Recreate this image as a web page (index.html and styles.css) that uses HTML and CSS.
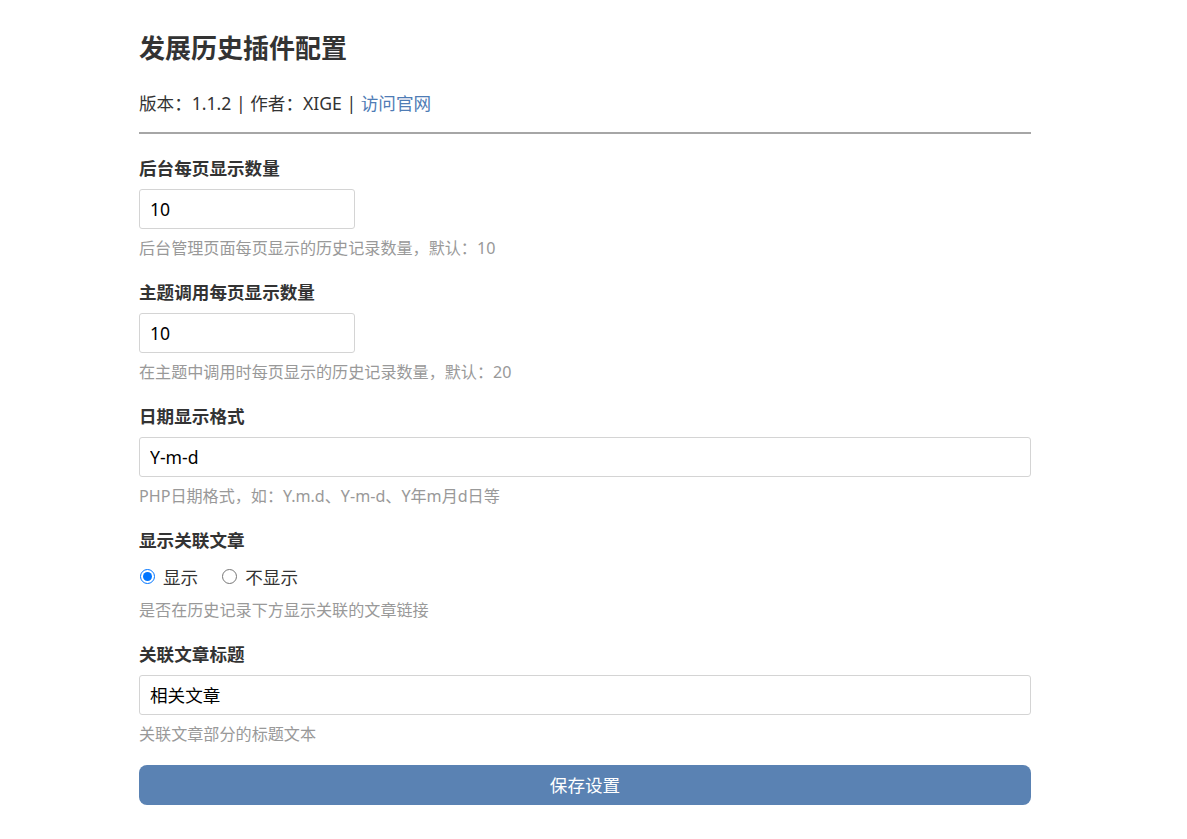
FILE: index.html
```html
<!DOCTYPE html>
<html lang="zh-CN">
<head>
    <meta charset="UTF-8">
    <meta name="viewport" content="width=device-width, initial-scale=1.0">
    <title>发展历史插件配置</title>
    <link rel="stylesheet" href="styles.css">
</head>
<body>
    <div class="wrap">
        <h1 class="page-title">发展历史插件配置</h1>
        <p class="meta">版本：1.1.2 | 作者：XIGE | <a href="#">访问官网</a></p>
        <hr class="divider">

        <form class="settings">
            <div class="field">
                <label class="field-label" for="adminPerPage">后台每页显示数量</label>
                <input class="text-input short" id="adminPerPage" type="text" value="10">
                <p class="help">后台管理页面每页显示的历史记录数量，默认：10</p>
            </div>

            <div class="field">
                <label class="field-label" for="themePerPage">主题调用每页显示数量</label>
                <input class="text-input short" id="themePerPage" type="text" value="10">
                <p class="help">在主题中调用时每页显示的历史记录数量，默认：20</p>
            </div>

            <div class="field">
                <label class="field-label" for="dateFormat">日期显示格式</label>
                <input class="text-input" id="dateFormat" type="text" value="Y-m-d">
                <p class="help">PHP日期格式，如：Y.m.d、Y-m-d、Y年m月d日等</p>
            </div>

            <div class="field">
                <span class="field-label">显示关联文章</span>
                <div class="radio-row">
                    <label class="radio"><input type="radio" name="showRelated" checked> 显示</label>
                    <label class="radio"><input type="radio" name="showRelated"> 不显示</label>
                </div>
                <p class="help">是否在历史记录下方显示关联的文章链接</p>
            </div>

            <div class="field">
                <label class="field-label" for="relatedTitle">关联文章标题</label>
                <input class="text-input" id="relatedTitle" type="text" value="相关文章">
                <p class="help">关联文章部分的标题文本</p>
            </div>

            <button class="save-btn" type="button">保存设置</button>
        </form>
    </div>
</body>
</html>
```

FILE: styles.css
```css
body {
    margin: 0;
    background: #fff;
    color: #333;
    font-family: "Noto Sans", "Noto Sans CJK SC", sans-serif;
    font-size: 17.6px;
}
.wrap {
    width: 892px;
    margin: 0 0 0 139px;
    padding: 32px 0 20px;
}
.page-title {
    margin: 0;
    font-size: 26px;
    line-height: 32px;
    font-weight: bold;
    color: #333;
}
.meta {
    margin: 27px 0 0;
    line-height: 24px;
}
.meta a {
    color: #4f7cb5;
    text-decoration: none;
}
.divider {
    margin: 17px 0 0;
    border: none;
    border-top: 2px solid #a6a6a6;
    height: 0;
}
.settings {
    margin-top: 21.5px;
}
.field {
    margin-bottom: 21px;
}
.field-label {
    display: block;
    font-weight: bold;
    line-height: 24px;
    margin-bottom: 9px;
}
.text-input {
    display: block;
    box-sizing: border-box;
    width: 100%;
    height: 40px;
    padding: 0 10px;
    border: 1px solid #d4d4d4;
    border-radius: 3px;
    font-family: "Noto Sans", "Noto Sans CJK SC", sans-serif;
    font-size: 17.6px;
    color: #000;
    outline: none;
}
.text-input.short {
    width: 216px;
}
.help {
    margin: 8px 0 0;
    font-size: 16.1px;
    line-height: 22px;
    color: #999;
}
.radio-row {
    display: flex;
    align-items: center;
    gap: 23px;
    height: 32px;
    margin-bottom: -2px;
}
.radio {
    display: flex;
    align-items: center;
    gap: 8px;
    color: #333;
}
.radio input {
    width: 15px;
    height: 15px;
    margin: 0 0 0 1px;
}
.save-btn {
    display: block;
    width: 100%;
    height: 40px;
    margin-top: -1px;
    border: none;
    border-radius: 8px;
    background: #5a82b3;
    color: #fff;
    font-family: "Noto Sans", "Noto Sans CJK SC", sans-serif;
    font-size: 17.6px;
    cursor: pointer;
}
```
